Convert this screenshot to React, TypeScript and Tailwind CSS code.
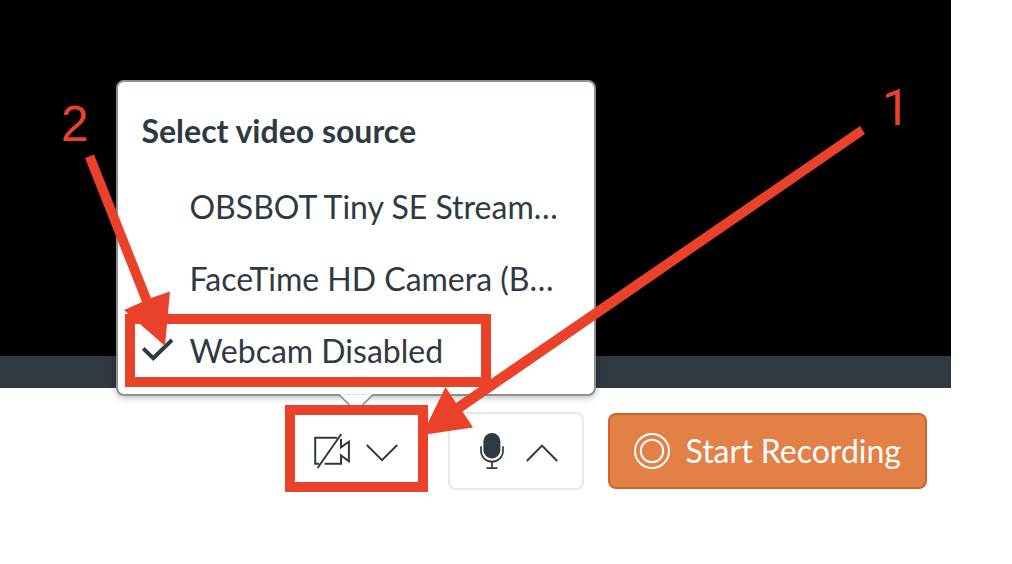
import React from "react";

const sources = [
  { label: "OBSBOT Tiny SE Stream…", selected: false },
  { label: "FaceTime HD Camera (B…", selected: false },
  { label: "Webcam Disabled", selected: true },
];

function CheckIcon() {
  return (
    <svg viewBox="0 0 32 32" className="size-8" fill="none" stroke="currentColor" strokeWidth="4" aria-hidden="true">
      <path d="M1.2 13.5 11.2 23.2 30 5" />
    </svg>
  );
}

function CameraOffIcon() {
  return (
    <svg viewBox="0 0 36 36" className="size-9" fill="none" stroke="currentColor" strokeWidth="2" aria-hidden="true">
      <path d="M23 4.7H1.2V30.8H5M10.5 30.8H27V22.5L34.9 28.3V8.6L27 14.2V6" />
      <path d="M27.3 1 3.6 35" />
    </svg>
  );
}

function MicIcon() {
  return (
    <svg viewBox="0 0 36 36" className="size-9" fill="none" stroke="currentColor" strokeWidth="1.7" aria-hidden="true">
      <rect x="9.4" y="0" width="17" height="25.5" rx="8.5" fill="currentColor" stroke="none" />
      <path d="M7 13.2V18a11 10.7 0 0 0 22 0V13.2M18 28.7V35M12.4 35.1H23.4" />
    </svg>
  );
}

function ChevronIcon({ up = false }: { up?: boolean }) {
  return (
    <svg viewBox="0 0 32 32" className="size-8" fill="none" stroke="currentColor" strokeWidth="2" aria-hidden="true">
      <path d={up ? "M.8 26 16 10.6 31.2 26" : "M.8 10 16 25.2 31.2 10"} />
    </svg>
  );
}

function RecordIcon() {
  return (
    <svg viewBox="0 0 36 36" className="size-9" fill="none" stroke="currentColor" strokeWidth="2" aria-hidden="true">
      <circle cx="18" cy="18" r="17" />
      <circle cx="18" cy="18" r="11.2" />
    </svg>
  );
}

function SourceMenu() {
  return (
    <div className="absolute bottom-full left-1/2 mb-4 w-[480px] -translate-x-1/2 rounded-lg border-2 border-[#8b919b] bg-white pt-[13px] pb-[7px] shadow-[0_2px_6px_rgba(0,0,0,0.25)]">
      <h2 id="source-title" className="mb-1 flex h-[72px] items-center px-6 text-[32px] font-bold">
        Select video source
      </h2>
      <div role="menu" aria-labelledby="source-title">
        {sources.map((s) => (
          <button
            key={s.label}
            type="button"
            role="menuitemradio"
            aria-checked={s.selected}
            className="flex h-[72px] w-full items-center gap-4 px-6 text-left text-[32px] whitespace-nowrap"
          >
            <span className="size-8 shrink-0">{s.selected && <CheckIcon />}</span>
            {s.label}
          </button>
        ))}
      </div>
      <svg viewBox="0 0 34 20" className="absolute top-full left-1/2 h-5 w-[34px] -translate-x-1/2" aria-hidden="true">
        <path d="M0 0H34L17 18Z" fill="#fff" />
        <path d="M1 .5H33" stroke="#e3e4e6" />
        <path d="M.5 1 17 17.5 33.5 1" fill="none" stroke="#8b919b" strokeWidth="1.6" />
      </svg>
    </div>
  );
}

function Annotations() {
  return (
    <div className="pointer-events-none absolute top-0 right-0 h-[564px] w-[1012px] text-[#ea412b]">
      <svg viewBox="0 0 1012 564" className="absolute inset-0 size-full" fill="currentColor" aria-hidden="true">
        <polygon points="860,126 865,134 462.5,411.5 473,427.5 422,435 445.5,387 456,403" />
        <polygon points="85,158 94,154.5 151,298 170,291.5 165,346 124,310 142,302" />
        <rect x="130" y="319" width="356" height="63" fill="none" stroke="currentColor" strokeWidth="10" />
        <rect x="290" y="410" width="133" height="77" fill="none" stroke="currentColor" strokeWidth="10" />
      </svg>
      <span className="absolute top-[96px] left-[61px] font-['Liberation_Sans',sans-serif] text-[50px] leading-[56px]">2</span>
      <span className="absolute top-[80px] left-[882px] font-['Roboto',sans-serif] text-[50px] leading-[56px]">1</span>
    </div>
  );
}

export default function App() {
  return (
    <main className="relative min-h-screen overflow-hidden bg-white pr-[61px] font-['Lato',sans-serif] text-[#2f3942]">
      <div className="h-[356px] bg-black" />
      <div className="h-8 bg-[#2f3942]" />
      <div className="flex items-center justify-end gap-6 px-6 pt-6">
        <div className="relative">
          <button
            type="button"
            aria-label="Video source"
            aria-expanded="true"
            className="flex h-[78px] items-center gap-4 rounded-lg border-2 border-[#e8e8e8] px-6"
          >
            <CameraOffIcon />
            <ChevronIcon />
          </button>
          <SourceMenu />
        </div>
        <button
          type="button"
          aria-label="Microphone source"
          className="flex h-[78px] items-center gap-4 rounded-lg border-2 border-[#e8e8e8] px-6"
        >
          <MicIcon />
          <ChevronIcon up />
        </button>
        <button
          type="button"
          className="flex h-[76px] items-center gap-4 rounded-lg border-2 border-[#d0632f] bg-[#e28046] px-6 text-[32px] whitespace-nowrap text-white"
        >
          <RecordIcon />
          Start Recording
        </button>
      </div>
      <Annotations />
    </main>
  );
}
